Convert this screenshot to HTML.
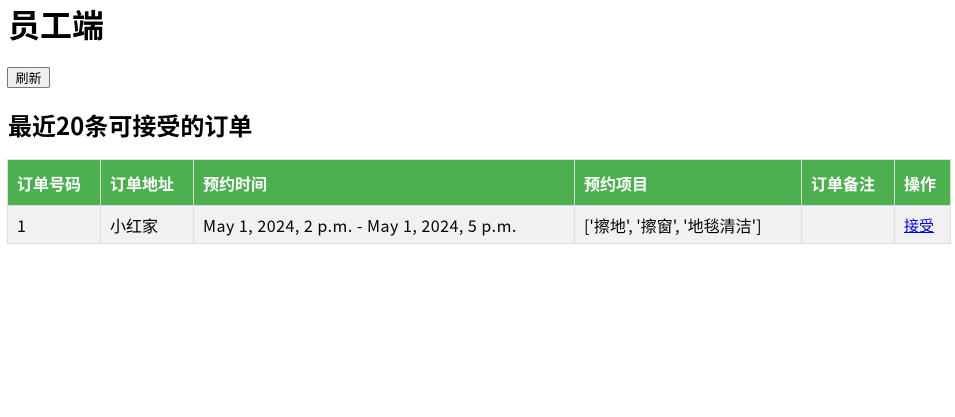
<!DOCTYPE html>
<html><head><meta charset="utf-8"><style>
body{margin:0;font-family:"Noto Sans CJK SC",sans-serif;background:#fff;color:#000}
h1{position:absolute;left:8px;top:4px;margin:0;font-size:32px;font-weight:bold;line-height:40px}
button{position:absolute;left:7px;top:67px;width:43px;height:21px;font-size:13px;line-height:17px;padding:0;border:1px solid #767676;border-radius:2px;background:#efefef;font-family:"Noto Sans CJK SC",sans-serif}
h2{position:absolute;left:8px;top:110px;margin:0;font-size:24px;font-weight:bold;line-height:30px}
table{position:absolute;left:7px;top:159px;border-collapse:collapse;table-layout:fixed;width:943px;font-size:16px}
td,th{border:1px solid #ddd;padding:0 9px;text-align:left;white-space:nowrap;overflow:hidden;vertical-align:middle;line-height:20px}
th{background:#4caf50;color:#fff;height:45px;font-weight:bold;font-size:16px}
td{background:#f1f1f1;height:37px}
.t{letter-spacing:0.5px}
a{color:#00e;text-decoration:underline;font-size:15px}
</style></head><body>
<h1>员工端</h1>
<button>刷新</button>
<h2>最近20条可接受的订单</h2>
<table>
<colgroup><col style="width:93px"><col style="width:93px"><col style="width:381px"><col style="width:227px"><col style="width:93px"><col style="width:56px"></colgroup>
<tr><th>订单号码</th><th>订单地址</th><th>预约时间</th><th>预约项目</th><th>订单备注</th><th>操作</th></tr>
<tr><td>1</td><td>小红家</td><td class="t">May 1, 2024, 2 p.m. - May 1, 2024, 5 p.m.</td><td>['擦地', '擦窗', '地毯清洁']</td><td></td><td><a href="#">接受</a></td></tr>
</table>
</body></html>
